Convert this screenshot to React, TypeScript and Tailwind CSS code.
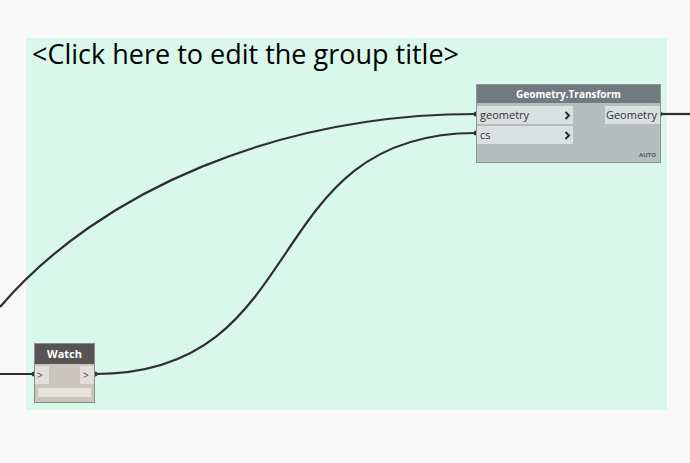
const Chevron = () => (
  <svg width="7" height="9" viewBox="0 0 7 9">
    <path d="M1.5 1 L5 4.5 L1.5 8" fill="none" stroke="#2a2a2a" strokeWidth="2" />
  </svg>
);

export default function App() {
  const ui = { fontFamily: '"Open Sans", "Noto Sans", sans-serif' };
  return (
    <div className="relative w-[690px] h-[463px] overflow-hidden bg-[#f8f8f8]" style={ui}>
      {/* group */}
      <div className="absolute left-[26px] top-[38px] w-[641px] h-[372px] bg-[#d9f7eb]">
        <div className="pl-[6px] text-[27px] leading-[32px] text-black">&lt;Click here to edit the group title&gt;</div>
      </div>

      {/* wires */}
      <svg className="absolute left-0 top-0" width="690" height="463">
        <g fill="none" stroke="#2f2f2f" strokeWidth="2.2">
          <path d="M0 307 C100 190 280 114 476 114" />
          <path d="M95 374 C315 374 256 133 476 133" />
          <path d="M0 374 L34 374" />
          <path d="M660 114 L690 114" />
        </g>
        <g fill="#333">
          <circle cx="476" cy="114" r="2.5" />
          <circle cx="476" cy="133" r="2.5" />
          <circle cx="660" cy="114" r="2.5" />
          <circle cx="34" cy="374" r="2.5" />
          <circle cx="95" cy="374" r="2.5" />
        </g>
      </svg>

      {/* Geometry.Transform node */}
      <div className="absolute left-[476px] top-[84px] w-[185px] h-[79px] bg-[#b6bdbf] border border-[#8c9396] flex flex-col">
        <div className="h-[18px] bg-[#717a7f] text-white text-[10px] font-bold leading-[18px] text-center">Geometry.Transform</div>
        <div className="flex justify-between pt-[3px]">
          <div className="flex flex-col gap-[2px]">
            <div className="w-[96px] h-[18px] bg-[#dadfe0] flex items-center justify-between pl-[3px] pr-[2px] text-[11px] text-[#333]">
              <span>geometry</span>
              <Chevron />
            </div>
            <div className="w-[96px] h-[18px] bg-[#dadfe0] flex items-center justify-between pl-[3px] pr-[2px] text-[11px] text-[#333]">
              <span>cs</span>
              <Chevron />
            </div>
          </div>
          <div className="w-[55px] h-[18px] bg-[#dadfe0] flex items-center justify-end pr-[3px] text-[11px] text-[#333]">Geometry</div>
        </div>
        <div className="flex-1 flex items-end justify-end pr-[4px] pb-[3px]">
          <span className="text-[6px] font-bold text-[#555] leading-[8px]">AUTO</span>
        </div>
      </div>

      {/* Watch node */}
      <div className="absolute left-[34px] top-[343px] w-[61px] h-[60px] bg-[#cbc5bf] border border-[#8e8a86] flex flex-col">
        <div className="h-[20px] bg-[#555353] text-white text-[11px] font-bold leading-[20px] text-center">Watch</div>
        <div className="flex justify-between pt-[2px]">
          <div className="w-[14px] h-[18px] bg-[#e2ded9] text-[10px] text-[#444] flex items-center pl-[2px]">&gt;</div>
          <div className="w-[14px] h-[18px] bg-[#e2ded9] text-[10px] text-[#444] flex items-center pl-[3px]">&gt;</div>
        </div>
        <div className="mx-[3px] mt-[4px] h-[9px] bg-[#e6e2de]" />
      </div>
    </div>
  );
}
